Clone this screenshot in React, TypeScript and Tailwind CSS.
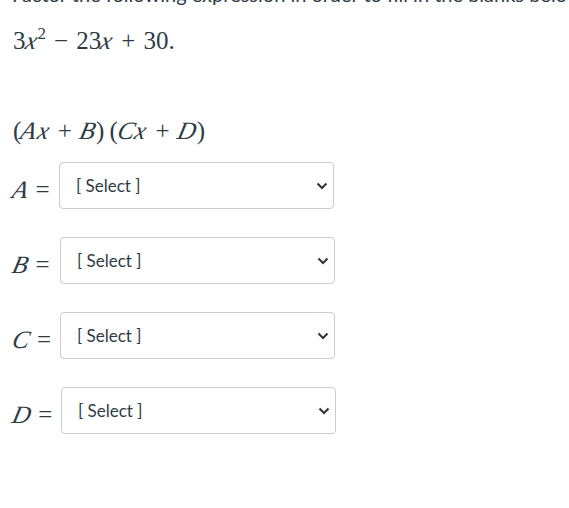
import React from "react";

const serif = { fontFamily: '"Liberation Serif", "Times New Roman", serif' };

function I({ children }: { children: React.ReactNode }) {
  return <span className="inline-block italic -skew-x-[13deg] mr-[1px]">{children}</span>;
}

function Op({ children }: { children: React.ReactNode }) {
  return <span className="mx-[0.32em]">{children}</span>;
}

function SelectBox() {
  return (
    <div className="relative w-[275px] h-[47px] rounded-[4px] border border-[#c7cdd1] bg-white flex items-center">
      <span className="pl-[16px] text-[17px] text-[#2d3b45]" style={{ fontFamily: 'Lato, "Liberation Sans", sans-serif' }}>
        [ Select ]
      </span>
      <svg className="absolute right-[5px] top-1/2 -translate-y-1/2" width="12" height="8" viewBox="0 0 12 8">
        <path d="M1.5 1.5 L6 6 L10.5 1.5" fill="none" stroke="#333" strokeWidth="2" />
      </svg>
    </div>
  );
}

function Row({ label, w }: { label: string; w: string }) {
  return (
    <div className="flex items-center">
      <div className={`text-[25px] text-[#2d3b45] pt-[8px] flex ${w}`} style={serif}>
        <I>{label}</I>
        <span className="ml-[0.25em]">=</span>
      </div>
      <SelectBox />
    </div>
  );
}

export default function App() {
  return (
    <div className="bg-white w-[569px] h-[508px] overflow-hidden text-[#2d3b45]">
      <div className="pl-[12px] mt-[-16px] text-[20px] whitespace-nowrap leading-[20px]" style={{ fontFamily: 'Lato, "Liberation Sans", sans-serif' }}>
        Factor the following expression in order to fill in the blanks below.
      </div>
      <div className="pl-[13px] mt-[23px] text-[25px] leading-[28px] whitespace-nowrap" style={serif}>
        3<I>x</I>
        <sup className="text-[17px] relative top-[-0.6em]">2</sup>
        <Op>−</Op>23<I>x</I>
        <Op>+</Op>30.
      </div>
      <div className="pl-[13px] mt-[62px] text-[25px] leading-[28px] whitespace-nowrap" style={serif}>
        (<I>A</I><I>x</I>
        <Op>+</Op>
        <I>B</I>)<span className="ml-[5px]">(</span><I>C</I><I>x</I>
        <Op>+</Op>
        <I>D</I>)
      </div>
      <div className="pl-[13px] mt-[17px] flex flex-col gap-[28px]">
        <Row label="A" w="w-[46px]" />
        <Row label="B" w="w-[47px]" />
        <Row label="C" w="w-[47px]" />
        <Row label="D" w="w-[48px]" />
      </div>
    </div>
  );
}
